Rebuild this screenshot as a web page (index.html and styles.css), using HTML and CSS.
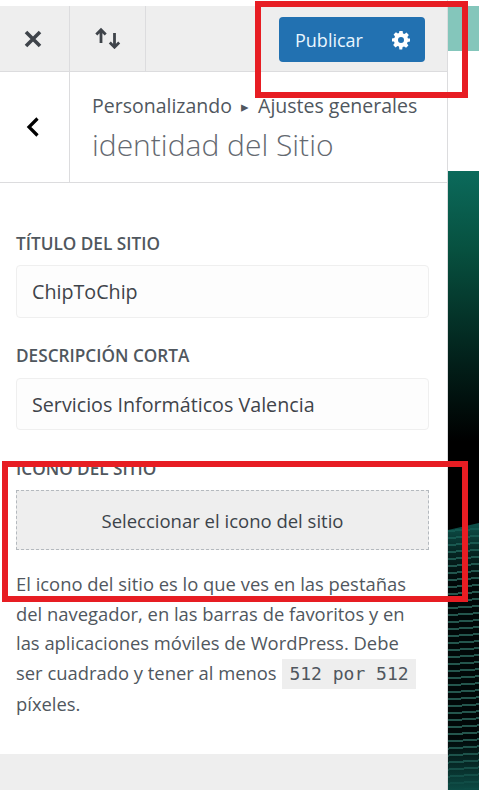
FILE: index.html
```html
<!DOCTYPE html>
<html lang="en">
<head>
    <meta charset="UTF-8">
    <meta name="viewport" content="width=device-width, initial-scale=1.0">
    <title>Identidad del Sitio</title>
    <link rel="stylesheet" href="styles.css">
</head>
<body>
    <div class="page">
        <div class="panel">
            <div class="toolbar">
                <button class="tool tool-close">
                    <svg width="20" height="20" viewBox="0 0 20 20"><path d="M3 3L17 17M17 3L3 17" stroke="#3f444a" stroke-width="3.600" fill="none"/></svg>
                </button>
                <button class="tool tool-sort">
                    <svg width="28" height="22" viewBox="0 0 28 22"><path d="M7 16V3M2.300 7.500L7 2.800L11.700 7.500M20.500 6V20M15.800 15.500L20.500 20.200L25.200 15.500" stroke="#3f444a" stroke-width="2.800" fill="none"/></svg>
                </button>
                <button class="publish">
                    <span>Publicar</span>
                    <svg width="20" height="20" viewBox="0 0 20 20"><path d="M8.400 1h3.200l.4 2.400 1.500.6 2-1.400 2.300 2.300-1.400 2 .6 1.500L19 8.400v3.200l-2.400.4-.6 1.500 1.400 2-2.300 2.300-2-1.400-1.500.6-.4 2.400H8.400L8 16.600l-1.500-.6-2 1.400-2.300-2.300 1.400-2-.6-1.500L1 11.600V8.400L3.400 8l.6-1.500-1.400-2 2.300-2.300 2 1.400L8 3zM10 7a3 3 0 1 0 0 6 3 3 0 0 0 0-6z" fill="#fff" fill-rule="evenodd"/></svg>
                </button>
            </div>
            <div class="section-head">
                <button class="back">
                    <svg width="16" height="22" viewBox="0 0 16 22"><path d="M12.500 2.500L4 11L12.500 19.500" stroke="#000" stroke-width="3.200" fill="none"/></svg>
                </button>
                <div class="crumbs">
                    <div class="crumb">Personalizando <span class="crumb-arrow">▸</span> Ajustes generales</div>
                    <div class="section-title">identidad del Sitio</div>
                </div>
            </div>
            <div class="fields">
                <label class="field-label">TÍTULO DEL SITIO</label>
                <div class="input">ChipToChip</div>
                <label class="field-label second">DESCRIPCIÓN CORTA</label>
                <div class="input short">Servicios Informáticos Valencia</div>
                <label class="field-label third">ICONO DEL SITIO</label>
                <div class="select-icon">Seleccionar el icono del sitio</div>
                <p class="help">El icono del sitio es lo que ves en las pestañas<br>del navegador, en las barras de favoritos y en<br>las aplicaciones móviles de WordPress. Debe<br>ser cuadrado y tener al menos <code>512 por 512</code><br>píxeles.</p>
            </div>
            <div class="panel-foot"></div>
        </div>
        <div class="preview">
            <div class="preview-band"></div>
            <div class="preview-blank"></div>
            <div class="preview-art"></div>
        </div>
    </div>
    <div class="mark mark-top"></div>
    <div class="mark mark-icon"></div>
</body>
</html>
```

FILE: styles.css
```css
*{
    box-sizing: border-box;
}
body{
    margin: 0;
    padding: 0;
    height: 790px;
    overflow: hidden;
    background-color: white;
    font-family: "Open Sans", "Noto Sans", sans-serif;
    color: #50575e;
}
.page{
    display: flex;
    height: 790px;
}

.panel{
    width: 448px;
    display: flex;
    flex-direction: column;
    border-right: 1px solid #dcdcde;
}
.toolbar{
    display: flex;
    align-items: center;
    height: 66px;
    margin-top: 6px;
    background-color: #eeeeee;
    border-bottom: 1px solid #dcdcde;
}
.tool{
    height: 65px;
    padding: 0;
    background: none;
    border: none;
    border-right: 1px solid #dcdcde;
    display: flex;
    align-items: center;
    justify-content: center;
}
.tool-close{
    width: 70px;
    padding-right: 4px;
}
.tool-sort{
    width: 76px;
    padding-bottom: 2px;
}
.publish{
    margin-left: auto;
    margin-right: 22px;
    margin-top: 2px;
    width: 146px;
    height: 45px;
    padding: 0 14px 0 16px;
    display: flex;
    align-items: center;
    justify-content: space-between;
    background-color: #2271b1;
    border: none;
    border-radius: 4px;
    color: #e9f6ff;
    font-family: inherit;
    font-size: 18px;
}

.section-head{
    display: flex;
    height: 111px;
    border-bottom: 1px solid #dcdcde;
}
.back{
    width: 70px;
    padding: 0 3px 0 0;
    background: none;
    border: none;
    border-right: 1px solid #dcdcde;
    display: flex;
    align-items: center;
    justify-content: center;
}
.crumbs{
    padding: 20px 0 0 22px;
}
.crumb{
    font-size: 19.500px;
    line-height: 28px;
    white-space: nowrap;
}
.crumb-arrow{
    font-size: 15px;
    vertical-align: 1px;
    padding: 0 4px;
}
.section-title{
    font-size: 30px;
    font-weight: 300;
    line-height: 38px;
    margin-top: 6px;
    color: #646970;
    white-space: nowrap;
}

.fields{
    flex: 1;
    padding: 50px 18px 0 16px;
}
.field-label{
    display: block;
    font-size: 17.200px;
    font-weight: 600;
    line-height: 22px;
}
.field-label.second{
    margin-top: 27px;
}
.field-label.third{
    margin-top: 28px;
}
.input{
    height: 53px;
    margin-top: 10px;
    padding-left: 15px;
    display: flex;
    align-items: center;
    background-color: #fdfdfd;
    border: 1px solid #efefef;
    border-radius: 4px;
    font-size: 19.700px;
    color: #3f444a;
}
.input.short{
    height: 52px;
    margin-top: 11px;
}
.select-icon{
    height: 60px;
    margin-top: 10px;
    display: flex;
    align-items: center;
    justify-content: center;
    background-color: #eeeeee;
    border: 1px dashed #b4b9be;
    font-size: 18.500px;
    color: #3c434a;
}
.help{
    margin: 19px 0 0 0;
    font-size: 18.400px;
    line-height: 29.500px;
    white-space: nowrap;
}
code{
    display: inline-block;
    margin-left: 1px;
    padding: 0 7px;
    line-height: 30px;
    background-color: #eeeeee;
    font-family: "DejaVu Sans Mono", monospace;
    font-size: 18px;
}
.panel-foot{
    height: 36px;
    background-color: #eeeeee;
}

.preview{
    flex: 1;
    display: flex;
    flex-direction: column;
}
.preview-band{
    height: 45px;
    margin-top: 6px;
    background-color: #84c6bb;
}
.preview-blank{
    height: 120px;
    background-color: white;
}
.preview-art{
    flex: 1;
    position: relative;
    background: linear-gradient(180deg, #0b6a5b 0, #07503f 80px, #02201a 190px, #000 270px);
}
.preview-art::after{
    content: "";
    position: absolute;
    left: 0;
    right: 0;
    top: 352px;
    bottom: 0;
    clip-path: polygon(0 7px, 100% 0, 100% 100%, 0 100%);
    background:
        linear-gradient(180deg, rgba(14, 90, 82, 0.9) 0, rgba(14, 90, 82, 0.35) 30px, transparent 60px, transparent 215px, #0c4a44 267px),
        repeating-linear-gradient(176deg, #24564d 0 2px, #010808 2px 7px);
}

.mark{
    position: absolute;
    border: 6px solid #e71d23;
}
.mark-top{
    left: 255px;
    top: 1px;
    width: 213px;
    height: 97px;
}
.mark-icon{
    left: 2px;
    top: 461px;
    width: 466px;
    height: 141px;
}
```
